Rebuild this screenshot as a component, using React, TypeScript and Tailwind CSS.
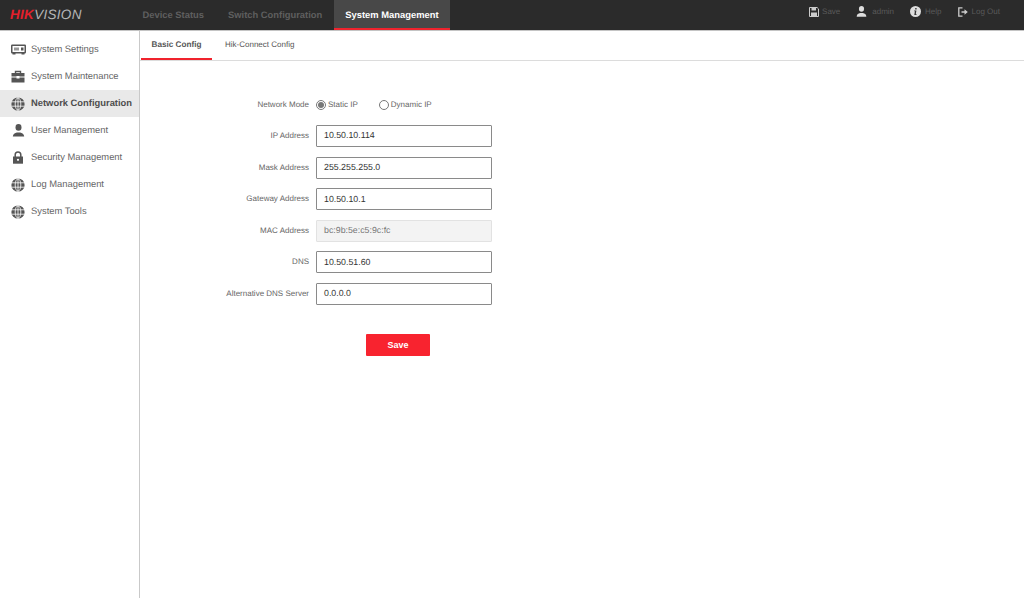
import type { ReactNode } from "react";

const font = { fontFamily: '"Liberation Sans", Arial, sans-serif' };

function SettingsIcon() {
  return (
    <svg width="15" height="11" viewBox="0 0 15 11" fill="none">
      <rect x="0.75" y="1.25" width="13.5" height="7.5" rx="0.5" stroke="#555" strokeWidth="1.5" />
      <rect x="3" y="3.5" width="5" height="3" fill="#999" />
      <rect x="10" y="3.5" width="2.5" height="3" fill="#555" />
      <rect x="1.5" y="9" width="3" height="1.5" fill="#555" />
      <rect x="10.5" y="9" width="3" height="1.5" fill="#555" />
    </svg>
  );
}

function CaseIcon() {
  return (
    <svg width="14" height="13" viewBox="0 0 14 13" fill="none">
      <path d="M4.5 3V1.5h5V3" stroke="#555" strokeWidth="1.4" />
      <path d="M0.5 3h13v3.6H8.5V6h-3v.6H.5z" fill="#555" />
      <path d="M0.5 7.4h5V8.6h3V7.4h5V12.5H.5z" fill="#555" />
    </svg>
  );
}

function GlobeIcon() {
  return (
    <svg width="14" height="14" viewBox="0 0 14 14" fill="none">
      <circle cx="7" cy="7" r="6.6" fill="#555" />
      <ellipse cx="7" cy="7" rx="2.8" ry="6.2" stroke="#fff" strokeWidth="0.8" />
      <path d="M1 4.8h12M1 9.2h12M7 .6v12.8" stroke="#fff" strokeWidth="0.8" />
    </svg>
  );
}

function UserIcon({ size = 13, color = "#555" }: { size?: number; color?: string }) {
  return (
    <svg width={size} height={size} viewBox="0 0 13 13" fill={color}>
      <ellipse cx="6.5" cy="3.4" rx="3" ry="3.3" />
      <path d="M.8 12.6c0-2.7 2.2-3.7 4-4.2h3.4c1.8.5 4 1.5 4 4.2z" />
    </svg>
  );
}

function LockIcon() {
  return (
    <svg width="12" height="13" viewBox="0 0 12 13" fill="none">
      <path d="M3.2 6V3.7a2.8 2.8 0 0 1 5.6 0V6" stroke="#555" strokeWidth="1.5" />
      <path d="M1 5.5h10v7.2H1z" fill="#555" />
      <circle cx="6" cy="8.8" r="1.1" fill="#fff" />
    </svg>
  );
}

function SaveIcon() {
  return (
    <svg width="10" height="10" viewBox="0 0 10 10" fill="none">
      <path d="M.5.5h7.6l1.4 1.4v7.6H.5z" stroke="#ccc" />
      <path d="M2.5 1h4.5v2.4H2.5zM2 5.5h6v3.5H2z" fill="#ccc" />
    </svg>
  );
}

function InfoIcon() {
  return (
    <svg width="11" height="11" viewBox="0 0 11 11">
      <circle cx="5.5" cy="5.5" r="5.5" fill="#ddd" />
      <path d="M5.2 2h1.4v1.4H5.2zM4.2 4.5h2.2L5.8 8.2h.8v.8H4.3l.6-3.7h-.7z" fill="#333" />
    </svg>
  );
}

function LogOutIcon() {
  return (
    <svg width="10" height="10" viewBox="0 0 10 10" fill="none">
      <path d="M4.5.8H.8v8.4h3.7" stroke="#ccc" strokeWidth="1.3" />
      <path d="M3.5 4.2h3V2.2L9.8 5 6.5 7.8v-2h-3z" fill="#ccc" />
    </svg>
  );
}

const menu: { label: string; icon: ReactNode; active?: boolean }[] = [
  { label: "System Settings", icon: <SettingsIcon /> },
  { label: "System Maintenance", icon: <CaseIcon /> },
  { label: "Network Configuration", icon: <GlobeIcon />, active: true },
  { label: "User Management", icon: <UserIcon /> },
  { label: "Security Management", icon: <LockIcon /> },
  { label: "Log Management", icon: <GlobeIcon /> },
  { label: "System Tools", icon: <GlobeIcon /> },
];

const fields = [
  { label: "IP Address", value: "10.50.10.114" },
  { label: "Mask Address", value: "255.255.255.0" },
  { label: "Gateway Address", value: "10.50.10.1" },
  { label: "MAC Address", value: "bc:9b:5e:c5:9c:fc", disabled: true },
  { label: "DNS", value: "10.50.51.60" },
  { label: "Alternative DNS Server", value: "0.0.0.0" },
];

function Radio({ checked, label }: { checked?: boolean; label: string }) {
  return (
    <span className="flex items-center gap-[2px]">
      <span className="flex h-[10px] w-[10px] items-center justify-center rounded-full border border-[#777] bg-white">
        {checked && <span className="h-[6px] w-[6px] rounded-full bg-[#777]" />}
      </span>
      {label}
    </span>
  );
}

export default function App() {
  return (
    <div className="flex h-[598px] w-[1024px] flex-col overflow-hidden bg-white [text-rendering:geometricPrecision]" style={font}>
      <header className="flex h-[31px] shrink-0 items-stretch border-b border-[#c4c4c4] bg-[#2b2b2b]">
        <div className="flex w-[130.5px] items-center pl-[10px] text-[13.5px] font-bold italic tracking-[0.3px]">
          <span className="text-[#e4202c]">HIK</span>
          <span className="font-normal text-[#b5b5b5]">VISION</span>
        </div>
        <nav className="flex text-[9.4px] font-bold text-[#5f5f5f]">
          <span className="flex items-center px-[12px]">Device Status</span>
          <span className="flex items-center px-[12px]">Switch Configuration</span>
          <span className="flex items-center border-b-2 border-[#f0232d] bg-[#484848] px-[11px] pt-[2px] text-white">
            System Management
          </span>
        </nav>
        <div className="ml-auto flex items-center gap-[16px] pb-[7px] pr-[24px] text-[8px] text-[#5a5a5a]">
          <span className="flex items-center gap-[3px]"><SaveIcon />Save</span>
          <span className="flex items-center gap-[5px]"><UserIcon size={11} color="#ddd" />admin</span>
          <span className="flex items-center gap-[4px]"><InfoIcon />Help</span>
          <span className="flex items-center gap-[4px]"><LogOutIcon />Log Out</span>
        </div>
      </header>
      <div className="flex min-h-0 flex-1">
        <aside className="w-[140px] shrink-0 border-r border-[#c9c9c9] pt-[5px]">
          {menu.map((m) => (
            <div
              key={m.label}
              className={`flex h-[27px] items-center text-[9.4px] ${m.active ? "bg-[#e9e9e9] font-bold text-[#4d4d4d]" : "text-[#666]"}`}
            >
              <span className="flex w-[31px] shrink-0 justify-center pl-[5px]">{m.icon}</span>
              <span className="whitespace-nowrap">{m.label}</span>
            </div>
          ))}
        </aside>
        <main className="min-w-0 flex-1">
          <div className="flex h-[30px] items-stretch border-b border-[#dcdcdc] pl-px text-[8px] text-[#555]">
            <span className="flex w-[71px] items-center justify-center border-b-2 border-[#f0232d] pt-[1px] text-[8.2px] font-bold">Basic Config</span>
            <span className="ml-[13px] flex items-center border-b-2 border-transparent">Hik-Connect Config</span>
          </div>
          <form className="flex flex-col pt-[37px]">
            <div className="flex h-[14px] items-center text-[8px] text-[#666]">
              <span className="w-[169px] text-right">Network Mode</span>
              <span className="ml-[7px] flex gap-[21px]">
                <Radio checked label="Static IP" />
                <Radio label="Dynamic IP" />
              </span>
            </div>
            <div className="mt-[13px] flex flex-col gap-[9.6px]">
              {fields.map((f) => (
                <div key={f.label} className="flex h-[22px] items-center text-[8px] text-[#666]">
                  <span className="w-[169px] whitespace-nowrap text-right">{f.label}</span>
                  <div
                    className={`ml-[7px] flex h-[22px] w-[176px] items-center rounded-[1px] border px-[7px] text-[8.8px] ${
                      f.disabled ? "border-[#e2e2e2] bg-[#f3f3f3] text-[#777]" : "border-[#8a8a8a] bg-white text-[#333]"
                    }`}
                  >
                    {f.value}
                  </div>
                </div>
              ))}
            </div>
            <button
              type="button"
              className="ml-[226px] mt-[29px] h-[22px] w-[64px] rounded-[1px] bg-[#f8232f] pt-[1px] text-[9px] font-bold text-white"
            >
              Save
            </button>
          </form>
        </main>
      </div>
    </div>
  );
}
